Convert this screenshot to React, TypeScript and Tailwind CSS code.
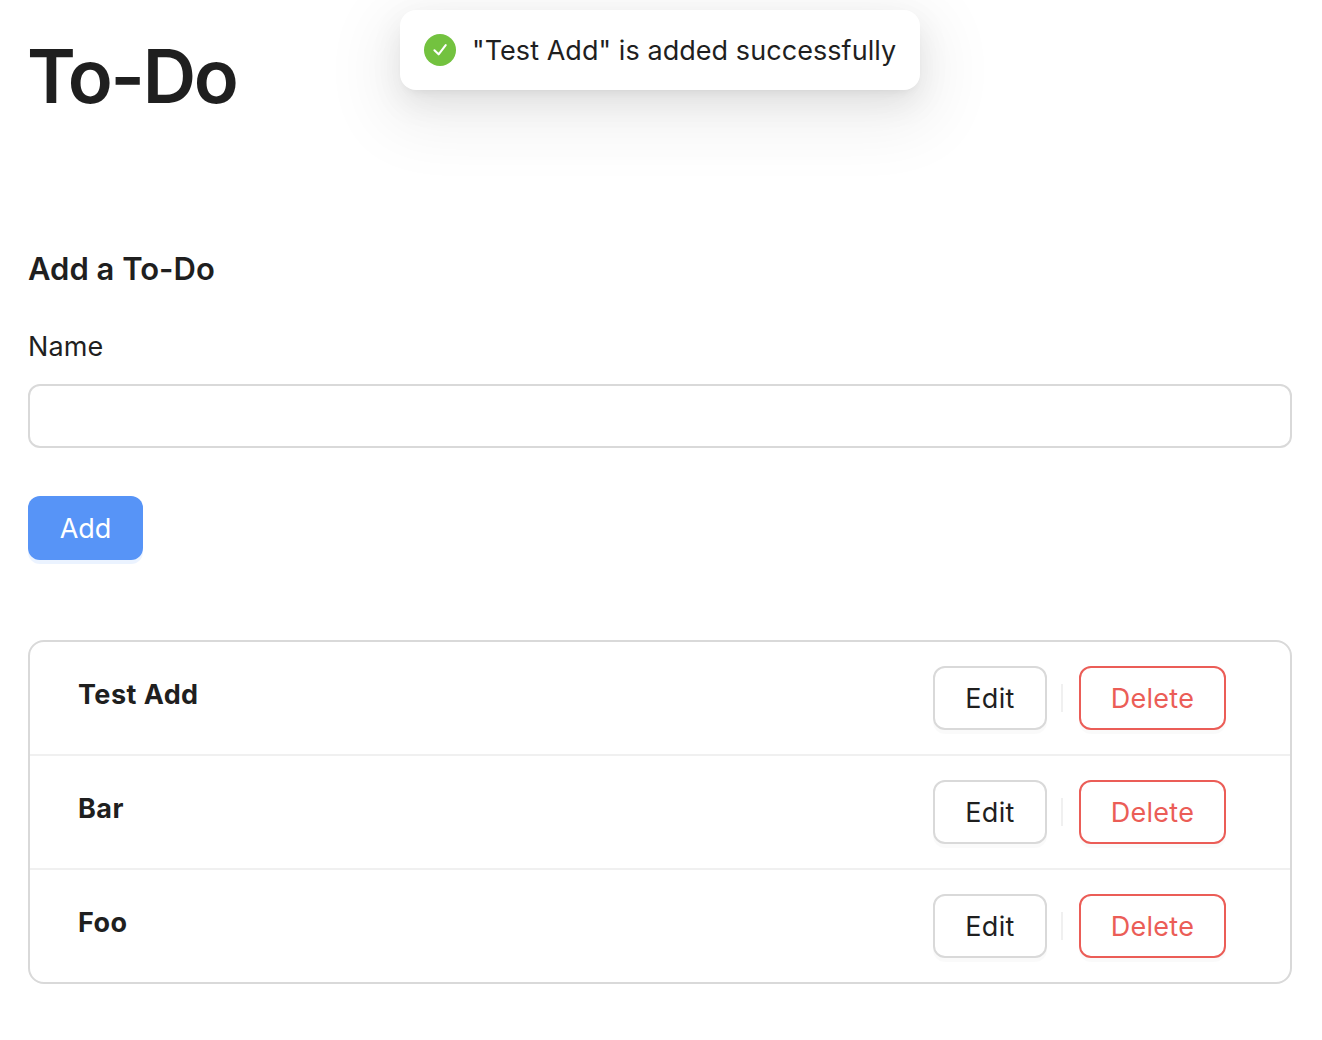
const todos = ["Test Add", "Bar", "Foo"];

function CheckIcon() {
  return (
    <svg className="size-8 shrink-0" viewBox="64 64 896 896" fill="none">
      <circle cx="512" cy="512" r="448" fill="#73c23f" />
      <path
        d="M356 520L474 634L672 376"
        stroke="#fff"
        strokeWidth="58"
        strokeLinecap="round"
        strokeLinejoin="round"
      />
    </svg>
  );
}

function TodoRow({ name }: { name: string }) {
  return (
    <li className="flex h-[114px] items-start border-b-2 border-[#f0f0f0] pt-6 pr-16 pl-12 last:h-[112px] last:border-b-0">
      <h4 className="mt-[7px] flex-1 leading-[44px] font-bold tracking-[0.45px]">{name}</h4>
      <button className="h-16 w-[114px] rounded-xl border-2 border-[#d9d9d9] bg-white pt-[2px] tracking-[0.35px] shadow-[0_4px_0_rgba(0,0,0,0.02)]">
        Edit
      </button>
      <span className="mt-[18px] mr-4 ml-[14px] h-7 w-[2px] bg-[#f0f0f0]" />
      <button className="h-16 w-[147px] rounded-xl border-2 border-[#eb5d57] bg-white pt-[2px] tracking-[0.25px] text-[#eb5d57] shadow-[0_4px_0_rgba(0,0,0,0.02)]">
        Delete
      </button>
    </li>
  );
}

export default function App() {
  return (
    <main className="relative h-[1040px] w-full overflow-hidden bg-white pr-[30px] pl-7 font-['Inter',sans-serif] text-[27px] text-[#1f1f1f]">
      <h1 className="-ml-px pt-[30px] text-[74px] leading-[92px] font-semibold tracking-[-2.3px]">To-Do</h1>
      <h2 className="mt-[123px] text-[31px] leading-[48px] font-semibold">Add a To-Do</h2>
      <label htmlFor="name" className="mt-8 block leading-[44px] tracking-[0.1px]">Name</label>
      <input id="name" className="mt-[15px] block h-16 w-full rounded-xl border-2 border-[#d9d9d9] px-[22px] outline-none" />
      <button className="mt-12 block h-16 w-[115px] rounded-xl bg-[#5794f7] pt-[2px] text-white shadow-[0_4px_0_rgba(5,100,255,0.08)]">
        Add
      </button>
      <ul className="mt-20 rounded-2xl border-2 border-[#d9d9d9]">
        {todos.map((name) => <TodoRow key={name} name={name} />)}
      </ul>
      <div className="absolute top-[10px] left-[400px] flex h-20 w-[520px] items-center gap-4 rounded-2xl bg-white px-6 whitespace-nowrap shadow-[0_12px_32px_0_rgba(0,0,0,0.08),0_6px_12px_-8px_rgba(0,0,0,0.12),0_20px_64px_20px_rgba(0,0,0,0.06)]">
        <CheckIcon />
        <span className="pt-[2px] tracking-[0.06px]">"Test Add" is added successfully</span>
      </div>
    </main>
  );
}
